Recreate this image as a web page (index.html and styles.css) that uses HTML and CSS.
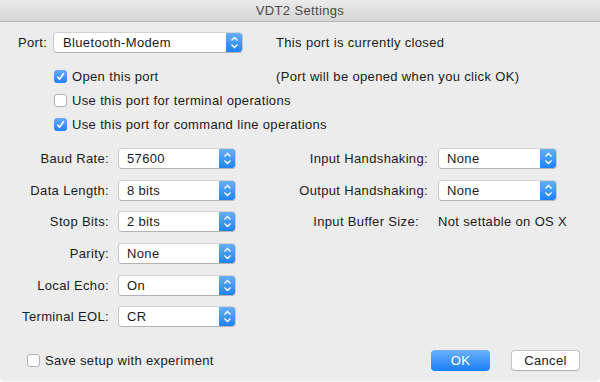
FILE: index.html
```html
<!DOCTYPE html>
<html lang="en">
<head>
	<meta charset="UTF-8">
	<title>VDT2 Settings</title>
	<link rel="stylesheet" href="styles.css">
</head>
<body>

	<div class="window">
		<div class="titlebar">VDT2 Settings</div>

		<div class="content">
			<div class="port-row">
				<span class="port-label">Port:</span>
				<div class="popup port-popup"><span>Bluetooth-Modem</span><i class="stepper"></i></div>
				<span class="note">This port is currently closed</span>
			</div>

			<div class="checks">
				<div class="check-row">
					<label class="check"><b class="box on"></b>Open this port</label>
					<span class="note">(Port will be opened when you click OK)</span>
				</div>
				<div class="check-row">
					<label class="check"><b class="box"></b>Use this port for terminal operations</label>
				</div>
				<div class="check-row">
					<label class="check"><b class="box on"></b>Use this port for command line operations</label>
				</div>
			</div>

			<div class="settings">
				<span class="lbl">Baud Rate:</span>
				<div class="popup"><span>57600</span><i class="stepper"></i></div>
				<span class="lbl lbl-r">Input Handshaking:</span>
				<div class="popup"><span>None</span><i class="stepper"></i></div>

				<span class="lbl">Data Length:</span>
				<div class="popup"><span>8 bits</span><i class="stepper"></i></div>
				<span class="lbl lbl-r">Output Handshaking:</span>
				<div class="popup"><span>None</span><i class="stepper"></i></div>

				<span class="lbl">Stop Bits:</span>
				<div class="popup"><span>2 bits</span><i class="stepper"></i></div>
				<span class="lbl lbl-r buf">Input Buffer Size:</span>
				<span class="value">Not settable on OS X</span>

				<span class="lbl">Parity:</span>
				<div class="popup"><span>None</span><i class="stepper"></i></div>
				<span></span><span></span>

				<span class="lbl">Local Echo:</span>
				<div class="popup"><span>On</span><i class="stepper"></i></div>
				<span></span><span></span>

				<span class="lbl">Terminal EOL:</span>
				<div class="popup"><span>CR</span><i class="stepper"></i></div>
				<span></span><span></span>
			</div>

			<div class="footer">
				<label class="check"><b class="box"></b>Save setup with experiment</label>
				<div class="buttons">
					<button class="btn default">OK</button>
					<button class="btn">Cancel</button>
				</div>
			</div>
		</div>
	</div>

</body>
</html>
```

FILE: styles.css
```css
*{
	margin: 0;
	padding: 0;
	box-sizing: border-box;
}
body{
	width: 600px;
	height: 382px;
	background: #f6f6f6;
	font-family: "Liberation Sans", Arial, sans-serif;
	font-size: 13px;
	letter-spacing: 0.35px;
	color: #1b1b1b;
	overflow: hidden;
}
.window{
	width: 600px;
	height: 381px;
	background: #ececec;
	border-radius: 0 0 5px 5px;
	display: flex;
	flex-direction: column;
}
.titlebar{
	height: 22px;
	line-height: 21px;
	text-align: center;
	color: #4a4a4a;
	background: linear-gradient(#ebebeb, #d5d5d5);
	border-bottom: 1px solid #b4b4b4;
}
.content{
	flex: 1;
	display: flex;
	flex-direction: column;
}

/* popup buttons */
.popup{
	height: 21px;
	background: #fff;
	border: 1px solid #c9c9c9;
	border-top-color: #d2d2d2;
	border-bottom-color: #b2b2b2;
	border-radius: 4px;
	display: flex;
	align-items: center;
	overflow: hidden;
}
.popup span{
	flex: 1;
	padding-left: 8px;
}
.stepper{
	width: 17px;
	height: 21px;
	margin: -1px -1px -1px 0;
	border-radius: 0 4px 4px 0;
	background: url("data:image/svg+xml;utf8,<svg xmlns='http://www.w3.org/2000/svg' width='17' height='21'><path d='M5.5 8.5 L8.5 5.5 L11.5 8.5 M5.5 12.5 L8.5 15.5 L11.5 12.5' fill='none' stroke='white' stroke-width='1.4'/></svg>") no-repeat center, linear-gradient(#6bb1fb, #1a7ff8);
}

/* port row */
.port-row{
	display: flex;
	align-items: center;
	height: 21px;
	margin-top: 10px;
}
.port-label{
	width: 53px;
	padding-left: 18px;
}
.port-popup{
	width: 190px;
}
.port-popup span{
	padding-left: 9px;
}
.port-row .note{
	margin-left: 33px;
}

/* checkboxes */
.checks{
	margin-top: 15px;
	padding-left: 54px;
	display: flex;
	flex-direction: column;
	gap: 8px;
}
.check-row{
	display: flex;
	align-items: center;
	height: 16px;
}
.check-row .note{
	margin-left: auto;
	width: 324px;
}
.check{
	display: flex;
	align-items: center;
}
.box{
	width: 13px;
	height: 13px;
	margin-right: 5px;
	border: 1px solid #b2b2b2;
	border-radius: 3px;
	background: #fff;
}
.box.on{
	border: 0;
	background: url("data:image/svg+xml;utf8,<svg xmlns='http://www.w3.org/2000/svg' width='13' height='13'><path d='M3.3 6.8 L5.6 9.3 L9.8 3.2' fill='none' stroke='white' stroke-width='1.6'/></svg>") no-repeat center, linear-gradient(#67aefc, #1f80f6);
}

/* settings grid */
.settings{
	margin-top: 16px;
	padding-left: 8px;
	display: grid;
	grid-template-columns: 110px 118px 202px 119px;
	grid-auto-rows: 21px;
	row-gap: 10.7px;
	align-items: center;
}
.lbl{
	text-align: right;
	padding-right: 9px;
}
.lbl-r{
	padding-right: 10px;
}
.buf{
	padding-right: 19px;
}
.value{
	white-space: nowrap;
}

/* footer */
.footer{
	margin-top: auto;
	margin-bottom: 10px;
	padding: 0 20px 0 27px;
	display: flex;
	align-items: center;
	justify-content: space-between;
}
.buttons{
	display: flex;
	gap: 21px;
}
.btn{
	height: 21px;
	font-family: inherit;
	font-size: 13px;
	letter-spacing: 0.35px;
	color: #1b1b1b;
	background: #fff;
	border: 1px solid #c6c6c6;
	border-bottom-color: #adadad;
	border-radius: 4px;
	width: 69px;
}
.btn.default{
	width: 59px;
	color: #fff;
	border: 0;
	background: linear-gradient(#6bb1fb, #1a7ff8);
}
```
